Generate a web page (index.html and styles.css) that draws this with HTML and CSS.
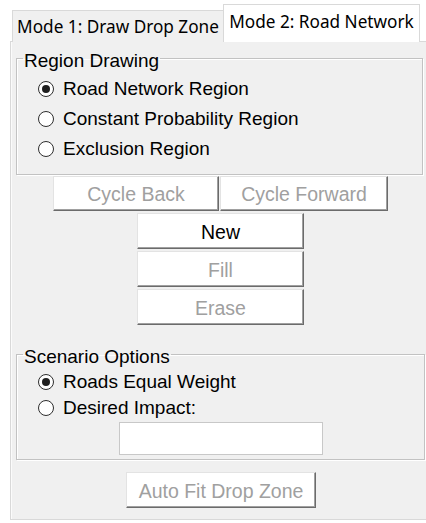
FILE: index.html
```html
<!DOCTYPE html>
<html lang="en">
<head>
<meta charset="utf-8">
<title>Drop Zone Tools</title>
<link rel="stylesheet" href="styles.css">
</head>
<body>
  <div class="tabs">
    <div class="tab">Mode 1: Draw Drop Zone</div>
    <div class="tab active">Mode 2: Road Network</div>
  </div>
  <div class="panel">
    <fieldset class="group group-region">
      <legend>Region Drawing</legend>
      <label class="radio row-tall"><span class="dot checked"></span>Road Network Region</label>
      <label class="radio row-tall"><span class="dot"></span>Constant Probability Region</label>
      <label class="radio row-tall"><span class="dot"></span>Exclusion Region</label>
    </fieldset>

    <div class="cycle-row">
      <button class="btn btn-back" disabled>Cycle Back</button>
      <button class="btn btn-forward" disabled>Cycle Forward</button>
    </div>

    <div class="stack">
      <button class="btn btn-wide">New</button>
      <button class="btn btn-wide" disabled>Fill</button>
      <button class="btn btn-wide" disabled>Erase</button>
    </div>

    <fieldset class="group group-scenario">
      <legend>Scenario Options</legend>
      <label class="radio row-short"><span class="dot checked"></span>Roads Equal Weight</label>
      <label class="radio row-short"><span class="dot"></span>Desired Impact:</label>
      <input class="impact" type="text">
    </fieldset>

    <button class="btn btn-auto" disabled>Auto Fit Drop Zone</button>
  </div>
</body>
</html>
```

FILE: styles.css
```css
* {
  box-sizing: border-box;
}

body {
  margin: 0;
  width: 426px;
  height: 523px;
  overflow: hidden;
  background: #ffffff;
  font-family: "Liberation Sans", Arial, sans-serif;
  color: #000;
}

/* ---- tab strip ---- */
.tabs {
  display: flex;
  align-items: flex-end;
  height: 42px;
  padding-left: 12px;
}

.tab {
  display: flex;
  align-items: center;
  justify-content: center;
  width: 212px;
  height: 32px;
  padding-bottom: 1px;
  background: #f0f0f0;
  border: 1px solid #d9d9d9;
  border-bottom: none;
  font-family: "Noto Sans", "Open Sans", sans-serif;
  font-size: 17.2px;
  color: #000;
  white-space: nowrap;
}

.tab.active {
  position: relative;
  z-index: 1;
  width: 197px;
  height: 38px;
  padding-bottom: 4px;
  background: #ffffff;
  margin-left: -1px;
}

/* ---- tab page ---- */
.panel {
  margin: -1px 0 0 10px;
  width: 430px;
  height: 479px;
  padding: 0 0 0 5px;
  background: #f0f0f0;
  border: 1px solid #d9d9d9;
  box-shadow: inset 1px 0 0 #fbfbfb;
  display: flex;
  flex-direction: column;
  align-items: flex-start;
}

/* ---- group boxes ---- */
.group {
  margin: 0;
  padding: 0;
  min-width: 0;
  border: 1px solid #c2c2c2;
  box-shadow: inset 1px 1px 0 #ffffff, 1px 1px 0 #ffffff;
}

.group legend {
  margin-left: 6px;
  padding: 6px 1px 0;
  font-size: 19px;
  line-height: 20px;
}

.group-region {
  width: 407px;
  margin-top: 3px;
  padding: 3px 0 10px;
}

.group-scenario {
  width: 409px;
  margin-top: 16px;
  padding: 2px 0 4px;
}

/* ---- radio buttons ---- */
.radio {
  display: flex;
  align-items: center;
  gap: 9px;
  padding-left: 21px;
  font-size: 19px;
  white-space: nowrap;
}

.row-tall {
  height: 30px;
}

.row-short {
  height: 26px;
}

.dot {
  flex: none;
  width: 16px;
  height: 16px;
  border-radius: 50%;
  border: 1.5px solid #2e2e2e;
  background: #fff;
  display: flex;
  align-items: center;
  justify-content: center;
}

.dot.checked::after {
  content: "";
  width: 8px;
  height: 8px;
  border-radius: 50%;
  background: #1f1f1f;
}

/* ---- push buttons ---- */
.btn {
  margin: 0;
  padding: 2px 0 0;
  height: 36px;
  background: #ffffff;
  border: 1px solid;
  border-color: #e3e3e3 #6b6b6b #6b6b6b #e3e3e3;
  box-shadow: inset -1px -1px 0 #a0a0a0;
  font-family: "Liberation Sans", Arial, sans-serif;
  font-size: 19.5px;
  color: #000;
}

.btn:disabled {
  color: #a0a0a0;
}

.cycle-row {
  display: flex;
  gap: 1px;
  margin: 1px 0 0 37px;
}

.btn-back {
  width: 166px;
  height: 35px;
}

.btn-forward {
  width: 168px;
  height: 35px;
}

.stack {
  display: flex;
  flex-direction: column;
  gap: 2px;
  margin: 2px 0 0 121px;
}

.btn-wide {
  width: 167px;
}

.btn-auto {
  width: 190px;
  margin: 12px 0 0 110px;
}

/* ---- text field ---- */
.impact {
  display: block;
  margin: 1px 0 0 102px;
  width: 204px;
  height: 33px;
  padding: 0 4px;
  background: #fff;
  border: 1px solid #c8c8c8;
  font-family: "Liberation Sans", Arial, sans-serif;
  font-size: 19px;
  outline: none;
}
```
